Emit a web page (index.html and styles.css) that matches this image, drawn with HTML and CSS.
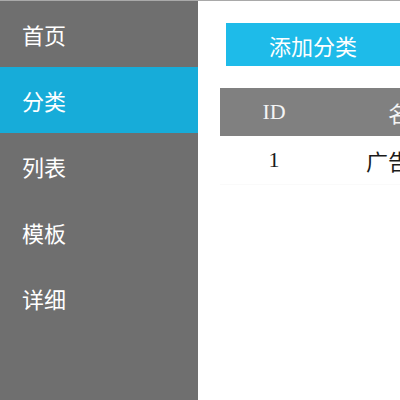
FILE: index.html
```html
<!DOCTYPE html>
<html lang="zh">
<head>
<meta charset="utf-8">
<title>分类</title>
<link rel="stylesheet" href="styles.css">
</head>
<body>
<div class="layout">
  <nav class="sidebar">
    <a class="nav-item">首页</a>
    <a class="nav-item active">分类</a>
    <a class="nav-item">列表</a>
    <a class="nav-item">模板</a>
    <a class="nav-item">详细</a>
  </nav>
  <main class="main">
    <div class="toolbar">
      <button class="btn-add">添加分类</button>
    </div>
    <table class="grid">
      <thead>
        <tr><th class="col-id">ID</th><th class="col-name">名称</th><th class="col-op">操作</th></tr>
      </thead>
      <tbody>
        <tr><td class="col-id">1</td><td class="col-name">广告分类</td><td class="col-op">编辑</td></tr>
      </tbody>
    </table>
  </main>
</div>
</body>
</html>
```

FILE: styles.css
```css
html, body {
  margin: 0;
  padding: 0;
  height: 100%;
  overflow: hidden;
  background: #ffffff;
}
body {
  border-top: 1px solid #a9a9a9;
  box-sizing: border-box;
  font-family: "Noto Sans CJK SC", "Noto Sans", sans-serif;
}
.layout {
  display: flex;
  height: 100%;
}
.sidebar {
  width: 198px;
  flex: none;
  background: #6f6f6f;
  display: flex;
  flex-direction: column;
}
.nav-item {
  display: flex;
  align-items: center;
  height: 66px;
  padding-left: 22px;
  color: #ffffff;
  font-size: 22px;
  line-height: 1;
}
.nav-item.active {
  background: #17acd9;
}
.main {
  flex: 1;
  min-width: 0;
  overflow: hidden;
  padding: 22px 0 0 22px;
}
.toolbar {
  padding-left: 6px;
  display: flex;
}
.btn-add {
  width: 174px;
  height: 43px;
  flex: none;
  border: none;
  background: #1ebbe9;
  color: #ffffff;
  font-family: "Noto Sans CJK SC", "Noto Sans", sans-serif;
  font-size: 22px;
  line-height: 1;
  padding: 0;
}
.grid {
  margin-top: 22px;
  border-collapse: collapse;
  table-layout: fixed;
  width: 400px;
}
.grid th, .grid td {
  height: 48px;
  padding: 0;
  text-align: center;
  font-size: 22px;
  font-weight: normal;
  white-space: nowrap;
  font-family: "Liberation Serif", "Noto Sans CJK SC", serif;
}
.grid th {
  background: #808080;
  color: #f4f4f4;
}
.grid td {
  color: #1a1a1a;
  border-bottom: 1px solid #fafafa;
}
.col-id { width: 108px; }
.col-name { width: 164px; }
.col-op { width: 128px; }
```
